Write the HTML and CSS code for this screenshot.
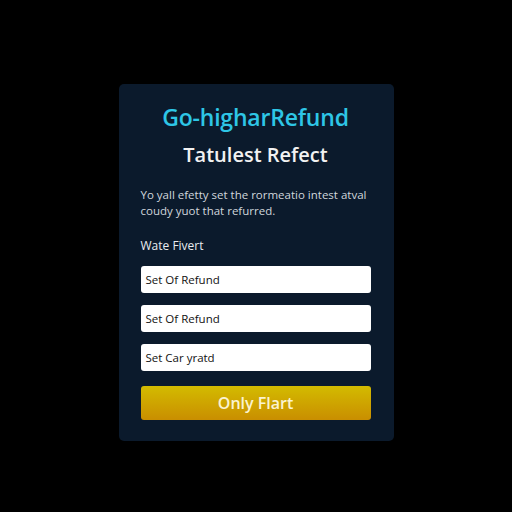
FILE: index.html
```html
<!DOCTYPE html>
<html>
<head>
<meta charset="utf-8">
<link rel="stylesheet" href="styles.css">
</head>
<body>
<div class="page">
  <div class="card">
    <h1 class="brand">Go-higharRefund</h1>
    <h2 class="subtitle">Tatulest Refect</h2>
    <p class="desc">Yo yall efetty set the rormeatio intest atval coudy yuot that refurred.</p>
    <div class="label">Wate Fivert</div>
    <div class="field">Set Of Refund</div>
    <div class="field">Set Of Refund</div>
    <div class="field">Set Car yratd</div>
    <button class="btn">Only Flart</button>
  </div>
</div>
</body>
</html>
```
FILE: styles.css
```css
html, body {
  margin: 0;
  padding: 0;
  background: #000;
}
.page {
  width: 512px;
  height: 512px;
  display: flex;
  justify-content: center;
  align-items: flex-start;
  padding-top: 84px;
  box-sizing: border-box;
}
.card {
  width: 275px;
  height: 357px;
  box-sizing: border-box;
  background: #0b1a2c;
  border-radius: 5px;
  padding: 0 23px 0 22px;
  display: flex;
  flex-direction: column;
  font-family: "Open Sans", "DejaVu Sans", sans-serif;
}
.brand {
  margin: 19px 0 0;
  text-align: center;
  font-size: 23px;
  font-weight: 600;
  color: #2ec6e6;
  letter-spacing: -0.2px;
  line-height: 28px;
}
.subtitle {
  margin: 11px 0 0;
  text-align: center;
  font-size: 20px;
  font-weight: 600;
  color: #f2f2f2;
  line-height: 26px;
}
.desc {
  margin: 19px 0 0;
  font-size: 11.5px;
  line-height: 16px;
  color: #d0d6dc;
}
.label {
  margin-top: 19px;
  font-size: 12px;
  color: #e8ecef;
  line-height: 16px;
}
.field {
  margin-top: 12px;
  height: 27px;
  background: #fff;
  border-radius: 3px;
  padding-left: 5px;
  font-size: 11.5px;
  line-height: 27px;
  color: #111;
}
.field + .field {
  margin-top: 12px;
}
.btn {
  margin-top: 15px;
  height: 34px;
  border: none;
  border-radius: 3px;
  background: linear-gradient(#d3bb00, #c98e00);
  color: #fbf3d0;
  font-family: "Open Sans", "DejaVu Sans", sans-serif;
  font-size: 16px;
  font-weight: 600;
}
```
